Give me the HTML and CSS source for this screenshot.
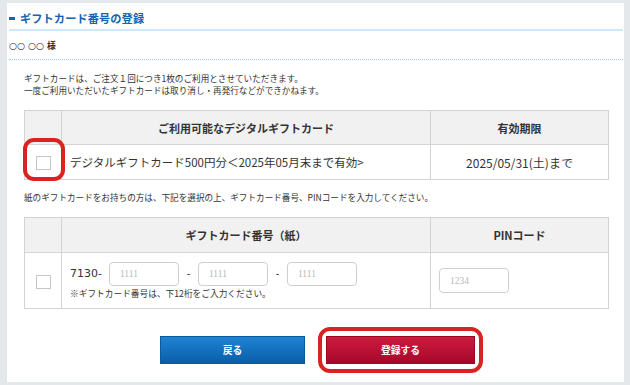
FILE: index.html
```html
<!DOCTYPE html>
<html lang="ja">
<head>
    <meta charset="UTF-8">
    <meta name="viewport" content="width=device-width, initial-scale=1.0">
    <title>ギフトカード番号の登録</title>
    <link rel="stylesheet" href="styles.css">
</head>
<body>
    <div class="panel">
        <h2 class="page-title">ギフトカード番号の登録</h2>
        <div class="customer-name">○○ ○○ <span class="honorific">様</span></div>

        <div class="page-body">
            <p class="notice notice-top">ギフトカードは、ご注文１回につき1枚のご利用とさせていただきます。<br>一度ご利用いただいたギフトカードは取り消し・再発行などができかねます。</p>

            <table class="gift-table">
                <tr class="head-row">
                    <th class="col-check"></th>
                    <th class="col-main">ご利用可能なデジタルギフトカード</th>
                    <th class="col-side">有効期限</th>
                </tr>
                <tr class="item-row">
                    <td class="col-check check-cell">
                        <span class="check"></span>
                        <span class="highlight"></span>
                    </td>
                    <td class="col-main card-name">デジタルギフトカード500円分＜2025年05月末まで有効&gt;</td>
                    <td class="col-side limit">2025/05/31(土)まで</td>
                </tr>
            </table>

            <p class="notice notice-paper">紙のギフトカードをお持ちの方は、下記を選択の上、ギフトカード番号、PINコードを入力してください。</p>

            <table class="gift-table">
                <tr class="head-row head-row-2">
                    <th class="col-check"></th>
                    <th class="col-main">ギフトカード番号（紙）</th>
                    <th class="col-side">PINコード</th>
                </tr>
                <tr class="paper-row">
                    <td class="col-check check-cell"><span class="check"></span></td>
                    <td class="col-main code-cell">
                        <div class="code-line">
                            <span class="prefix">7130-</span>
                            <input type="text" class="code-input" placeholder="1111">
                            <span class="sep">-</span>
                            <input type="text" class="code-input" placeholder="1111">
                            <span class="sep">-</span>
                            <input type="text" class="code-input" placeholder="1111">
                        </div>
                        <p class="code-note">※ギフトカード番号は、下12桁をご入力ください。</p>
                    </td>
                    <td class="col-side pin-cell">
                        <input type="text" class="code-input" placeholder="1234">
                    </td>
                </tr>
            </table>

            <div class="actions">
                <a href="#" class="btn btn-back">戻る</a>
                <span class="btn-ring"><a href="#" class="btn btn-submit">登録する</a></span>
            </div>
        </div>
    </div>
</body>
</html>
```

FILE: styles.css
```css
/* 基本設定 */
body {
    margin: 0;
    background-color: #e4e8eb;
    font-family: "DejaVu Sans", "Noto Sans CJK JP", sans-serif;
    color: #333333;
    -webkit-font-smoothing: antialiased;
}

/* 白いパネル */
.panel {
    margin: 3px 6px 0 7px;
    height: 379px;
    background-color: #ffffff;
}

/* 見出し */
.page-title {
    display: flex;
    align-items: center;
    height: 22px;
    margin: 0 1px 0 2px;
    padding-top: 4px;
    border-bottom: 2px solid #cde8f8;
    font-family: "Noto Sans CJK JP", sans-serif;
    font-size: 11.2px;
    font-weight: 700;
    color: #1463ae;
    letter-spacing: 0.1px;
}
.page-title::before {
    content: "";
    width: 6px;
    height: 3px;
    margin-right: 5px;
    background-color: #1463ae;
}

.customer-name {
    display: flex;
    align-items: center;
    gap: 0;
    height: 28px;
    margin: 0 1px 0 2px;
    border-bottom: 1px dotted #9cc7ea;
    font-family: "DejaVu Sans", sans-serif;
    font-size: 9.2px;
    color: #333333;
    white-space: pre;
}
.customer-name .honorific {
    font-family: "Noto Sans CJK JP", sans-serif;
    font-size: 8.8px;
    font-weight: 700;
}

.page-body {
    padding: 0 16px 0 17px;
}

/* 注意書き */
.notice {
    margin: 0;
    font-family: "Noto Sans CJK JP", sans-serif;
    font-size: 8.6px;
    line-height: 12px;
}
.notice-top {
    margin-top: 12px;
    margin-bottom: 14px;
}
.notice-paper {
    margin-top: 11px;
    margin-bottom: 14px;
}

/* ギフトカード表 */
.gift-table {
    width: 585px;
    border-collapse: collapse;
    table-layout: fixed;
}
.gift-table th,
.gift-table td {
    border: 1px solid #d3d3d3;
    padding: 0;
}
.gift-table th {
    background-color: #f1f1f1;
    font-family: "Noto Sans CJK JP", sans-serif;
    font-size: 11px;
    font-weight: 700;
    color: #333333;
}
.col-check {
    width: 36px;
}
.col-side {
    width: 177px;
}
.head-row {
    height: 34px;
}
.head-row-2 {
    height: 35px;
}
.item-row {
    height: 35px;
}
.paper-row {
    height: 56px;
}

.check-cell {
    position: relative;
    text-align: center;
    vertical-align: middle;
}
.check {
    display: inline-block;
    width: 13px;
    height: 12px;
    border: 1px solid #c6c6c6;
    background-color: #ffffff;
    vertical-align: middle;
}

/* 赤枠の強調 */
.highlight {
    position: absolute;
    left: -2px;
    top: -7px;
    width: 34px;
    height: 35px;
    border: 4px solid #d92320;
    border-radius: 11px;
}

.gift-table .card-name {
    padding-left: 8px;
    font-family: "Noto Sans CJK JP", sans-serif;
    font-size: 11.5px;
}
.gift-table .limit {
    text-align: center;
    font-family: "Noto Sans CJK JP", sans-serif;
    font-size: 12px;
}

/* 紙のギフトカード入力 */
.gift-table .code-cell {
    padding-left: 8px;
}
.code-line {
    display: flex;
    align-items: center;
}
.prefix {
    margin-right: 7px;
    font-size: 11px;
}
.sep {
    width: 19px;
    text-align: center;
    font-size: 10px;
}
.code-input {
    width: 70px;
    height: 24px;
    box-sizing: border-box;
    margin: 0;
    padding: 0 0 0 10px;
    border: 1px solid #cfcfcf;
    border-radius: 4px;
    font-family: "Liberation Serif", serif;
    font-size: 9.5px;
    color: #333333;
    background-color: #ffffff;
}
.code-input::placeholder {
    color: #b8b8b8;
}
.code-note {
    margin: 2px 0 0;
    font-family: "Noto Sans CJK JP", sans-serif;
    font-size: 8.7px;
    line-height: 12px;
}
.gift-table .pin-cell {
    padding-left: 8px;
    vertical-align: middle;
}
.pin-cell .code-input {
    height: 25px;
}

/* ボタン */
.actions {
    display: flex;
    align-items: center;
    gap: 13px;
    margin-top: 18px;
    padding-left: 136px;
}
.btn {
    display: flex;
    align-items: center;
    justify-content: center;
    width: 145px;
    height: 28px;
    box-sizing: border-box;
    font-family: "Noto Sans CJK JP", sans-serif;
    font-size: 9.8px;
    font-weight: 700;
    color: #ffffff;
    text-decoration: none;
}
.btn-back {
    background: linear-gradient(#1f83d3, #0a5ea9);
    border: 1px solid #0b5a9e;
}
.btn-ring {
    display: inline-flex;
    padding: 5px 4px;
    border: 4px solid #d92320;
    border-radius: 12px;
}
.btn-submit {
    width: 149px;
    background: linear-gradient(#cc1b3e, #a6082a);
    border: 1px solid #9a0624;
}
```
